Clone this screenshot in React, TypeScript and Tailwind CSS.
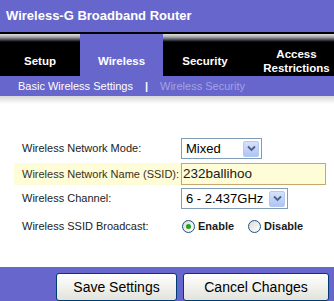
import React from "react";

const font = { fontFamily: '"Liberation Sans", Arial, sans-serif' };

function DropButton() {
  return (
    <div className="flex h-[16px] w-[16px] items-center justify-center rounded-[2px] border border-[#b3c8f3] bg-gradient-to-b from-[#d6e2fc] to-[#aec4f4]">
      <svg width="9" height="7" viewBox="0 0 9 7">
        <path d="M1 1.5 L4.5 5 L8 1.5" fill="none" stroke="#4d6185" strokeWidth="1.8" />
      </svg>
    </div>
  );
}

function Select({ value, width }: { value: string; width: string }) {
  return (
    <div className={`flex h-[21px] ${width} items-center justify-between border border-[#7f9db9] bg-white pl-[4px] pr-[2px]`}>
      <span className="text-[13px] leading-none text-black">{value}</span>
      <DropButton />
    </div>
  );
}

function Radio({ checked }: { checked?: boolean }) {
  return (
    <span className="flex h-[13px] w-[13px] items-center justify-center rounded-full border border-[#1c5180] bg-gradient-to-br from-[#dcdcd6] to-white">
      {checked && <span className="h-[5px] w-[5px] rounded-full bg-[#21a121]" />}
    </span>
  );
}

function Tab({ label, active, className }: { label: React.ReactNode; active?: boolean; className: string }) {
  return (
    <div
      className={`flex items-center justify-center pt-[11px] text-center text-[11.5px] font-bold leading-[14px] text-white ${className} ${
        active ? "bg-[#6666cc]" : "bg-[linear-gradient(to_bottom,#e0e0e0_0px,#a8a8a8_3px,#404050_6px,#000_8px)]"
      }`}
    >
      {label}
    </div>
  );
}

export default function App() {
  return (
    <div className="flex h-[301px] w-[334px] flex-col overflow-hidden bg-white" style={font}>
      <div className="flex h-[32px] items-center bg-[#6666cc] pl-[6px]">
        <span className="text-[13px] font-bold text-white">Wireless-G Broadband Router</span>
      </div>
      <div className="h-[2px] bg-black" />
      <div className="flex h-[42px]">
        <Tab label="Setup" className="w-[80px]" />
        <Tab label="Wireless" active className="w-[83px]" />
        <Tab label="Security" className="w-[84px]" />
        <Tab
          label={
            <span>
              Access
              <br />
              Restrictions
            </span>
          }
          className="flex-1 pl-[12px]"
        />
      </div>
      <div className="flex h-[20px] items-center bg-[#6666cc] pl-[18px] text-[11px]">
        <span className="text-white">Basic Wireless Settings</span>
        <span className="ml-[12px] font-bold text-white">|</span>
        <span className="ml-[12px] text-[#a3a3e6]">Wireless Security</span>
      </div>
      <div className="h-[8px] bg-gradient-to-b from-[#d6d6d6] to-white" />

      <div className="flex flex-1 flex-col pt-[34px] text-[11px] text-[#222]">
        <div className="ml-[14px] flex h-[21px] w-[312px] items-center">
          <span className="w-[167px] pl-[8px]">Wireless Network Mode:</span>
          <Select value="Mixed" width="w-[81px]" />
        </div>
        <div className="ml-[14px] mt-[4px] flex h-[22px] w-[312px] items-center bg-[#fffcd8]">
          <span className="w-[167px] pl-[8px] text-[#3a3020]">Wireless Network Name (SSID):</span>
          <div className="flex h-[22px] flex-1 items-center border border-[#c9a66b] bg-[#fffcd8] pl-[1px]">
            <span className="text-[13.5px] leading-none text-[#1a1a1a]">232ballihoo</span>
          </div>
        </div>
        <div className="ml-[14px] mt-[3px] flex h-[21px] w-[312px] items-center">
          <span className="w-[167px] pl-[8px]">Wireless Channel:</span>
          <Select value="6 - 2.437GHz" width="w-[107px]" />
        </div>
        <div className="ml-[14px] mt-[9px] flex h-[16px] w-[312px] items-center">
          <span className="w-[168px] pl-[8px]">Wireless SSID Broadcast:</span>
          <Radio checked />
          <span className="ml-[3px] font-bold text-[#1a1a1a]">Enable</span>
          <span className="ml-[14px]" />
          <Radio />
          <span className="ml-[3px] font-bold text-[#1a1a1a]">Disable</span>
        </div>
      </div>

      <div className="flex h-[34px] justify-end gap-[6px] bg-[#6666cc] pr-[5px] pt-[6px]">
        <button className="h-[28px] w-[121px] rounded-[3px] border border-[#003c74] bg-gradient-to-b from-white to-[#e3e3dc] text-[14px] text-black">
          Save Settings
        </button>
        <button className="h-[28px] w-[146px] rounded-[3px] border border-[#003c74] bg-gradient-to-b from-white to-[#e3e3dc] text-[14px] text-black">
          Cancel Changes
        </button>
      </div>
    </div>
  );
}
